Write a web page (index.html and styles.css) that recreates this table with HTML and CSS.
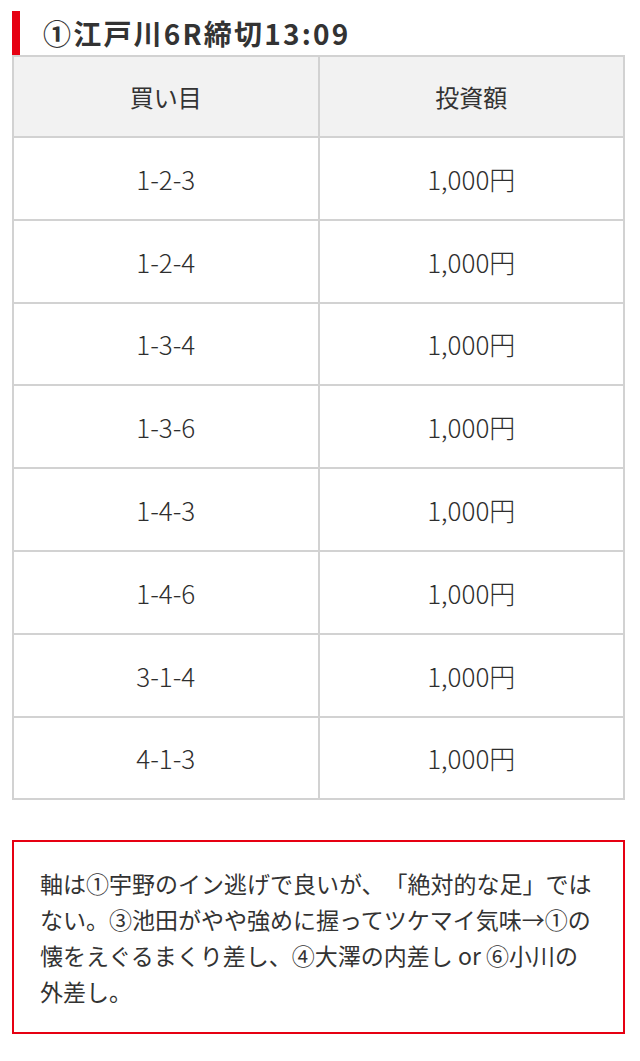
FILE: index.html
```html
<!DOCTYPE html>
<html lang="ja">
<head>
<meta charset="utf-8">
<title>①江戸川6R締切13:09</title>
<link rel="stylesheet" href="styles.css">
</head>
<body>
<main class="page">
  <h2 class="race-title">①江戸川6R締切13:09</h2>
  <table class="bets">
    <thead>
      <tr><th>買い目</th><th>投資額</th></tr>
    </thead>
    <tbody>
      <tr><td>1-2-3</td><td>1,000円</td></tr>
      <tr><td>1-2-4</td><td>1,000円</td></tr>
      <tr><td>1-3-4</td><td>1,000円</td></tr>
      <tr><td>1-3-6</td><td>1,000円</td></tr>
      <tr><td>1-4-3</td><td>1,000円</td></tr>
      <tr><td>1-4-6</td><td>1,000円</td></tr>
      <tr><td>3-1-4</td><td>1,000円</td></tr>
      <tr><td>4-1-3</td><td>1,000円</td></tr>
    </tbody>
  </table>
  <div class="note">
    <p>軸は①宇野のイン逃げで良いが、「絶対的な足」ではない。③池田がやや強めに握ってツケマイ気味→①の懐をえぐるまくり差し、④大澤の内差し or ⑥小川の外差し。</p>
  </div>
</main>
</body>
</html>
```

FILE: styles.css
```css
html, body {
  margin: 0;
  padding: 0;
  background: #ffffff;
}

body {
  font-family: "Noto Sans CJK JP", "Noto Sans", sans-serif;
  color: #333333;
  text-spacing-trim: space-all;
}

.page {
  width: 613px;
  margin-left: 12px;
  padding-top: 11px;
}

.race-title {
  margin: 0;
  height: 44px;
  display: flex;
  align-items: center;
  border-left: 8px solid #e60012;
  padding-left: 23px;
  font-size: 28px;
  font-weight: 700;
  letter-spacing: 2.2px;
  line-height: 1;
  color: #333333;
}

.bets {
  width: 613px;
  border-collapse: collapse;
  table-layout: fixed;
}

.bets th,
.bets td {
  border: 2px solid #d2d2d2;
  padding: 0;
  text-align: center;
  vertical-align: middle;
  font-weight: 400;
  color: #333333;
}

.bets th {
  height: 79px;
  font-size: 24px;
  background: #f2f2f2;
}

.bets td {
  height: 80.8px;
  font-size: 26px;
  font-weight: 300;
  color: #2e2e2e;
}

.note {
  margin-top: 40px;
  border: 2px solid #e60012;
  padding: 23px 26px;
}

.note p {
  margin: 0;
  font-size: 23px;
  line-height: 36px;
  color: #333333;
}
```
